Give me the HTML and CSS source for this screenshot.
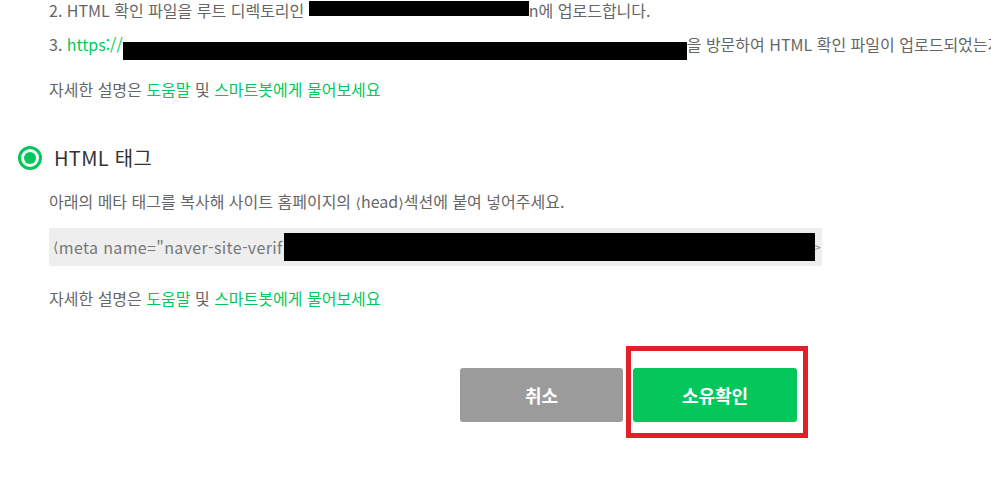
FILE: index.html
```html
<!DOCTYPE html>
<html lang="ko">
<head>
<meta charset="utf-8">
<link rel="stylesheet" href="styles.css">
</head>
<body>
<div class="page">
  <div class="steps">
    <div class="step">2. HTML 확인 파일을 루트 디렉토리인 <span class="redact r-line2"></span>n에 업로드합니다.</div>
    <div class="step">3. <span class="link">https://</span><span class="redact r-line3"></span>을 방문하여 HTML 확인 파일이 업로드되었는지</div>
  </div>
  <p class="help">자세한 설명은 <span class="link">도움말</span> 및 <span class="link">스마트봇에게 물어보세요</span></p>

  <div class="option">
    <span class="radio"><span class="radio-dot"></span></span>
    <span class="option-label">HTML 태그</span>
  </div>
  <p class="desc">아래의 메타 태그를 복사해 사이트 홈페이지의 <span class="ang">⟨</span>head<span class="ang">⟩</span>섹션에 붙여 넣어주세요.</p>
  <div class="codebox"><span class="ang">⟨</span>meta name="naver-site-verif<span class="redact r-code"></span><span class="tail">&gt;</span></div>
  <p class="help help2">자세한 설명은 <span class="link">도움말</span> 및 <span class="link">스마트봇에게 물어보세요</span></p>

  <div class="actions">
    <button class="btn btn-cancel">취소</button>
    <div class="confirm-wrap">
      <button class="btn btn-confirm">소유확인</button>
      <span class="highlight"></span>
    </div>
  </div>
</div>
</body>
</html>
```

FILE: styles.css
```css
html, body {
  margin: 0;
  padding: 0;
  background: #fff;
}
body {
  width: 991px;
  height: 478px;
  overflow: hidden;
  font-family: "Noto Sans CJK KR", "Noto Sans", "DejaVu Sans", sans-serif;
  font-size: 16px;
  color: #666;
}
.page {
  padding-left: 49px;
}
.steps {
  display: flex;
  flex-direction: column;
  gap: 14px;
}
.step {
  line-height: 20px;
  height: 20px;
  white-space: nowrap;
}
.link {
  color: #03c75a;
}
.redact {
  display: inline-block;
  background: #000;
  vertical-align: middle;
}
.r-line2 {
  width: 220px;
  height: 15px;
  margin-top: -8px;
}
.r-line3 {
  width: 564px;
  height: 18px;
  margin-bottom: -8px;
}
.help {
  margin: 24px 0 0;
  line-height: 22px;
}
.option {
  display: flex;
  align-items: center;
  gap: 12px;
  margin: 46px 0 0 -31px;
  height: 24px;
}
.radio {
  box-sizing: border-box;
  width: 24px;
  height: 24px;
  border: 3px solid #03c75a;
  border-radius: 50%;
  display: flex;
  align-items: center;
  justify-content: center;
}
.radio-dot {
  width: 12px;
  height: 12px;
  border-radius: 50%;
  background: #03c75a;
}
.option-label {
  font-size: 20px;
  font-weight: 400;
  color: #333;
  line-height: 24px;
  letter-spacing: 0.3px;
}
.desc {
  margin: 20px 0 0;
  line-height: 22px;
}
.ang {
  font-family: "DejaVu Sans", sans-serif;
  font-size: 14px;
}
.codebox {
  box-sizing: border-box;
  margin-top: 14px;
  width: 773px;
  height: 38px;
  background: #eeeeee;
  padding-left: 4px;
  display: flex;
  align-items: center;
  white-space: nowrap;
  color: #777;
  letter-spacing: 0.35px;
}
.r-code {
  width: 531px;
  height: 28px;
  margin-left: 1px;
}
.tail {
  font-size: 11px;
  color: #888;
}
.help2 {
  margin-top: 21px;
}
.actions {
  display: flex;
  gap: 10px;
  margin: 59px 0 0 411px;
}
.btn {
  border: none;
  border-radius: 3px;
  width: 163px;
  height: 54px;
  color: #fff;
  font-family: "Noto Sans CJK KR", sans-serif;
  font-size: 18px;
  font-weight: 700;
  padding: 0;
}
.btn-cancel {
  background: #9b9b9b;
}
.confirm-wrap {
  position: relative;
}
.btn-confirm {
  width: 164px;
  background: #03c75a;
  display: block;
}
.highlight {
  position: absolute;
  left: -7px;
  top: -22px;
  width: 182px;
  height: 92px;
  box-sizing: border-box;
  border: 5px solid #e3202a;
}
```
